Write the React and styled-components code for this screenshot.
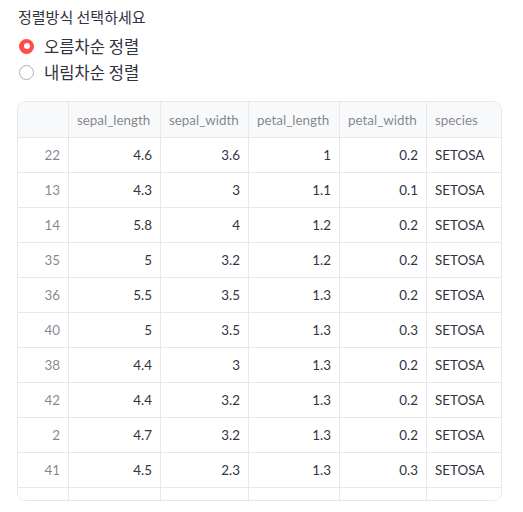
import React, { useState } from "react";
import styled, { createGlobalStyle } from "styled-components";

const GlobalStyle = createGlobalStyle`
    body {
        margin: 0;
        background: #ffffff;
        font-family: "Lato", "Noto Sans CJK KR", sans-serif;
        color: rgb(49, 51, 63);
    }
`;

const Page = styled.div`
    display: flex;
    flex-direction: column;
    padding: 6px 21px 0 17px;
`;

const Label = styled.div`
    font-family: "Noto Sans CJK KR", sans-serif;
    font-size: 15px;
    line-height: 22px;
    padding-left: 1px;
    color: rgb(49, 51, 63);
`;

const RadioGroup = styled.div`
    display: flex;
    flex-direction: column;
    margin-top: 6px;
    gap: 2px;
`;

const RadioRow = styled.label`
    display: flex;
    align-items: center;
    gap: 10px;
    height: 24px;
    padding-left: 2px;
    cursor: pointer;
    font-family: "Noto Sans CJK KR", sans-serif;
    font-size: 16.6px;
    color: rgb(49, 51, 63);
`;

const Dot = styled.span`
    width: 15px;
    height: 15px;
    border-radius: 50%;
    box-sizing: border-box;
    background: ${(p) => (p.checked ? "#ff4b4b" : "#fff")};
    border: ${(p) => (p.checked ? "none" : "1px solid #aeb0b5")};
    display: flex;
    align-items: center;
    justify-content: center;
    &::after {
        content: "";
        width: 6px;
        height: 6px;
        border-radius: 50%;
        background: #fff;
        display: ${(p) => (p.checked ? "block" : "none")};
    }
`;

const TableBox = styled.div`
    margin-top: 17px;
    height: 398px;
    border: 1px solid #e6e8ee;
    border-radius: 8px;
    overflow: hidden;
`;

const Grid = styled.div`
    display: grid;
    grid-template-columns: 51px 92px 88px 91px 87px 75px;
    grid-auto-rows: 35px;
    grid-template-rows: 36px;
`;

const Cell = styled.div`
    box-sizing: border-box;
    border-right: ${(p) => (p.last ? "none" : "1px solid #e6e8ee")};
    border-bottom: 1px solid #e6e8ee;
    display: flex;
    align-items: center;
    justify-content: ${(p) => (p.left ? "flex-start" : "flex-end")};
    padding: 0 8px;
    font-size: 13.4px;
    white-space: nowrap;
    background: ${(p) => (p.head ? "#f8f9fb" : "#fff")};
    color: ${(p) => (p.muted ? "rgba(49, 51, 63, 0.6)" : "rgb(49, 51, 63)")};
`;

const columns = ["sepal_length", "sepal_width", "petal_length", "petal_width", "species"];

const rows = [
    [22, 4.6, 3.6, 1, 0.2],
    [13, 4.3, 3, 1.1, 0.1],
    [14, 5.8, 4, 1.2, 0.2],
    [35, 5, 3.2, 1.2, 0.2],
    [36, 5.5, 3.5, 1.3, 0.2],
    [40, 5, 3.5, 1.3, 0.3],
    [38, 4.4, 3, 1.3, 0.2],
    [42, 4.4, 3.2, 1.3, 0.2],
    [2, 4.7, 3.2, 1.3, 0.2],
    [41, 4.5, 2.3, 1.3, 0.3],
];

const App = () => {
    const [order, setOrder] = useState("asc");

    return (
        <Page>
            <GlobalStyle />
            <Label>정렬방식 선택하세요</Label>
            <RadioGroup>
                <RadioRow onClick={() => setOrder("asc")}>
                    <Dot checked={order === "asc"} />
                    오름차순 정렬
                </RadioRow>
                <RadioRow onClick={() => setOrder("desc")}>
                    <Dot checked={order === "desc"} />
                    내림차순 정렬
                </RadioRow>
            </RadioGroup>
            <TableBox>
                <Grid>
                    <Cell head muted />
                    {columns.map((c, i) => (
                        <Cell key={c} head muted left last={i === columns.length - 1}>
                            {c}
                        </Cell>
                    ))}
                    {rows.map((r) => (
                        <React.Fragment key={r[0]}>
                            <Cell muted>{r[0]}</Cell>
                            {r.slice(1).map((v, i) => (
                                <Cell key={i}>{v}</Cell>
                            ))}
                            <Cell left last>SETOSA</Cell>
                        </React.Fragment>
                    ))}
                    {/* partially visible row */}
                    <Cell />
                    <Cell />
                    <Cell />
                    <Cell />
                    <Cell />
                    <Cell last />
                </Grid>
            </TableBox>
        </Page>
    );
};

export default App;
